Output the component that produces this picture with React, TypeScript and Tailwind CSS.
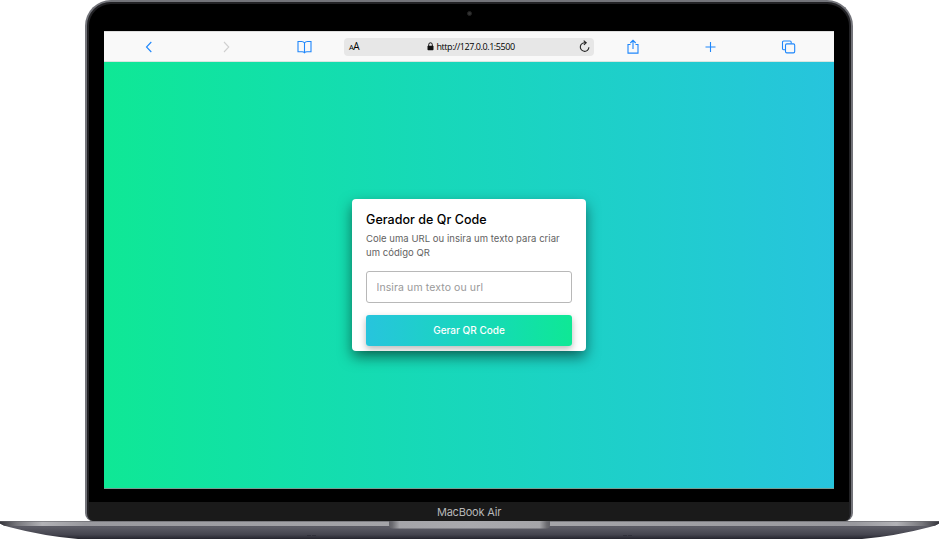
import React from "react";

const iconProps = { fill: "none", stroke: "#1f87fb", strokeWidth: 1.1 };

function Toolbar() {
  return (
    <div className="grid h-[31px] shrink-0 grid-cols-[78px_78px_78px_250px_78px_78px_78px] place-items-center border-b border-[#d9e6e0] border-t border-t-[#dedede] bg-[#f9f9f9] px-[6px]">
      <svg width="16" height="16" viewBox="0 0 16 16" {...iconProps}>
        <path d="M10.3 3 L5.5 8 L10.3 13" />
      </svg>
      <svg width="16" height="16" viewBox="0 0 16 16" {...iconProps} stroke="#d0d0d0">
        <path d="M5 3 L9.8 8 L5 13" />
      </svg>
      <svg width="16" height="16" viewBox="0 0 16 16" {...iconProps}>
        <path d="M7.5 3.8 Q6.5 2.5 4.5 2.5 H1 V12.7 H5 Q6.7 12.7 7.5 13.8 Q8.3 12.7 10 12.7 H14 V2.5 H10.5 Q8.5 2.5 7.5 3.8 V13.8" />
      </svg>
      <div className="flex h-[18px] w-full items-center justify-between rounded-[4px] bg-[#e7e7e7] pl-[5px] pr-[3px] text-black">
        <span className="w-[16px] whitespace-nowrap font-['Open_Sans',sans-serif] text-[10px] leading-none tracking-[-0.4px]">
          <span className="text-[7.5px]">A</span>A
        </span>
        <div className="flex items-center gap-[3px]">
          <svg width="7" height="9" viewBox="0 0 7 9">
            <rect x="0.5" y="3.7" width="6" height="4.5" rx="0.7" fill="#111" />
            <path d="M1.7 4 V2.6 a1.8 1.8 0 0 1 3.6 0 V4" fill="none" stroke="#111" />
          </svg>
          <span className="w-[80px] whitespace-nowrap font-['Open_Sans',sans-serif] text-[9px] leading-none tracking-[-0.44px]">http://127.0.0.1:5500</span>
        </div>
        <svg width="13" height="13" viewBox="0 0 13 13" fill="none" stroke="#222" strokeWidth="1.1">
          <path d="M7.8 2.9 A4.3 4.3 0 1 0 10.9 7.2 M5.7 0.7 L8.2 2.8 L5.9 4.9" />
        </svg>
      </div>
      <svg width="16" height="16" viewBox="0 0 16 16" {...iconProps}>
        <path d="M5.5 5.5 H3 V14.1 H13 V5.5 H10.5 M8 10 V1.3 M5.3 4 L8 1.3 L10.7 4" />
      </svg>
      <svg width="16" height="16" viewBox="0 0 16 16" {...iconProps}>
        <path d="M7.5 3 V13 M2.5 8 H12.5" />
      </svg>
      <svg width="16" height="16" viewBox="0 0 16 16" {...iconProps}>
        <path d="M4.2 10.7 H2.7 Q1.5 10.7 1.5 9.5 V3.2 Q1.5 2 2.7 2 H9 Q10.2 2 10.2 3.2 V4.6" />
        <rect x="4.5" y="4.9" width="9.2" height="9" rx="1.3" />
      </svg>
    </div>
  );
}

function Card() {
  return (
    <div className="h-[152px] w-[234px] rounded-[4px] bg-white px-[14px] pt-[13px] font-['Inter','Liberation_Sans',sans-serif] shadow-[0_6px_14px_rgba(0,0,0,0.5)]">
      <h1 className="h-4 whitespace-nowrap text-[12.5px] font-medium leading-4 tracking-[0.04px] text-black">Gerador de Qr Code</h1>
      <p className="mt-[4px] h-7 whitespace-nowrap text-[9.5px] leading-[14px] tracking-[0.04px] text-[#626262]">
        Cole uma URL ou insira um texto para criar
        <br />
        um código QR
      </p>
      <input
        className="mt-[11px] block h-[32px] w-[206px] rounded-[3px] border border-[#b8b8b8] bg-white px-[9.5px] pt-[2px] text-[10.5px] tracking-[0.1px] outline-none placeholder:text-[#999]"
        placeholder="Insira um texto ou url"
      />
      <button className="mt-[12px] block h-[31px] w-[206px] rounded-[3px] bg-linear-to-r from-[#27c4dd] to-[#0fe895] text-[10px] font-medium text-white shadow-[0_3px_7px_rgba(0,0,0,0.28)]">
        Gerar QR Code
      </button>
    </div>
  );
}

function Base() {
  return (
    <svg className="block shrink-0" width="939" height="18" viewBox="0 0 939 18">
      <defs>
        <linearGradient id="body" x2="0" y2="1">
          <stop offset="0" stopColor="#50505a" />
          <stop offset="0.35" stopColor="#5c5c65" />
          <stop offset="0.75" stopColor="#45454f" />
          <stop offset="1" stopColor="#25252e" />
        </linearGradient>
        <linearGradient id="edge">
          <stop offset="0" stopColor="#34343b" />
          <stop offset="0.018" stopColor="#77777c" />
          <stop offset="0.045" stopColor="#b2b2b6" />
          <stop offset="0.09" stopColor="#99999e" />
          <stop offset="0.5" stopColor="#a7a7ab" />
          <stop offset="0.91" stopColor="#99999e" />
          <stop offset="0.955" stopColor="#b2b2b6" />
          <stop offset="0.982" stopColor="#77777c" />
          <stop offset="1" stopColor="#34343b" />
        </linearGradient>
        <linearGradient id="notch">
          <stop offset="0" stopColor="#606066" />
          <stop offset="0.02" stopColor="#6b6b70" />
          <stop offset="0.065" stopColor="#a5a5a9" />
          <stop offset="0.5" stopColor="#a9a9ad" />
          <stop offset="0.935" stopColor="#a5a5a9" />
          <stop offset="0.98" stopColor="#6b6b70" />
          <stop offset="1" stopColor="#606066" />
        </linearGradient>
        <clipPath id="outline">
          <path d="M0 0 H939 V2.5 Q936 4.5 930 6 Q896 15 862 18 H78 Q43 15 9 6 Q3 4.5 0 2.5 Z" />
        </clipPath>
      </defs>
      <g clipPath="url(#outline)">
        <rect width="939" height="18" fill="url(#body)" />
        <rect width="939" height="5" fill="url(#edge)" />
        <rect width="939" height="0.6" fill="#66666b" />
      </g>
      <path d="M389 0 H550 V4 Q550 7.5 546 7.5 H393 Q389 7.5 389 4 Z" fill="url(#notch)" />
      <path d="M307 14.5 H316 M623 14.5 H632" stroke="#30303a" strokeDasharray="4 1" />
    </svg>
  );
}

export default function App() {
  return (
    <main className="flex h-[539px] w-[939px] flex-col overflow-hidden bg-white">
      <div className="ml-[85px] flex h-[521px] w-[768px] shrink-0 flex-col rounded-b-[8px] rounded-t-[26px] border-2 border-b-0 border-[#73747a] bg-black shadow-[inset_0_0_0_2px_#222225]">
        <div className="flex h-[29px] shrink-0 items-center justify-center pb-[6px] pl-px">
          <div className="size-[5px] rounded-full border border-[#222] bg-[#333]" />
        </div>
        <section className="ml-[17px] flex h-[458px] w-[730px] shrink-0 flex-col">
          <Toolbar />
          <div className="flex min-h-0 flex-1 items-center justify-center border-b border-[#769c94] bg-linear-to-r from-[#0fe895] to-[#27c4dd] pb-px">
            <Card />
          </div>
        </section>
        <div className="mx-[2px] mt-[13px] flex flex-1 items-center justify-center rounded-b-[6px] bg-[#1a1a1a] pt-[2px] font-['Inter','Liberation_Sans',sans-serif] text-[11px] leading-none tracking-[-0.2px] text-[#b7b7b7]">
          MacBook Air
        </div>
      </div>
      <Base />
    </main>
  );
}
